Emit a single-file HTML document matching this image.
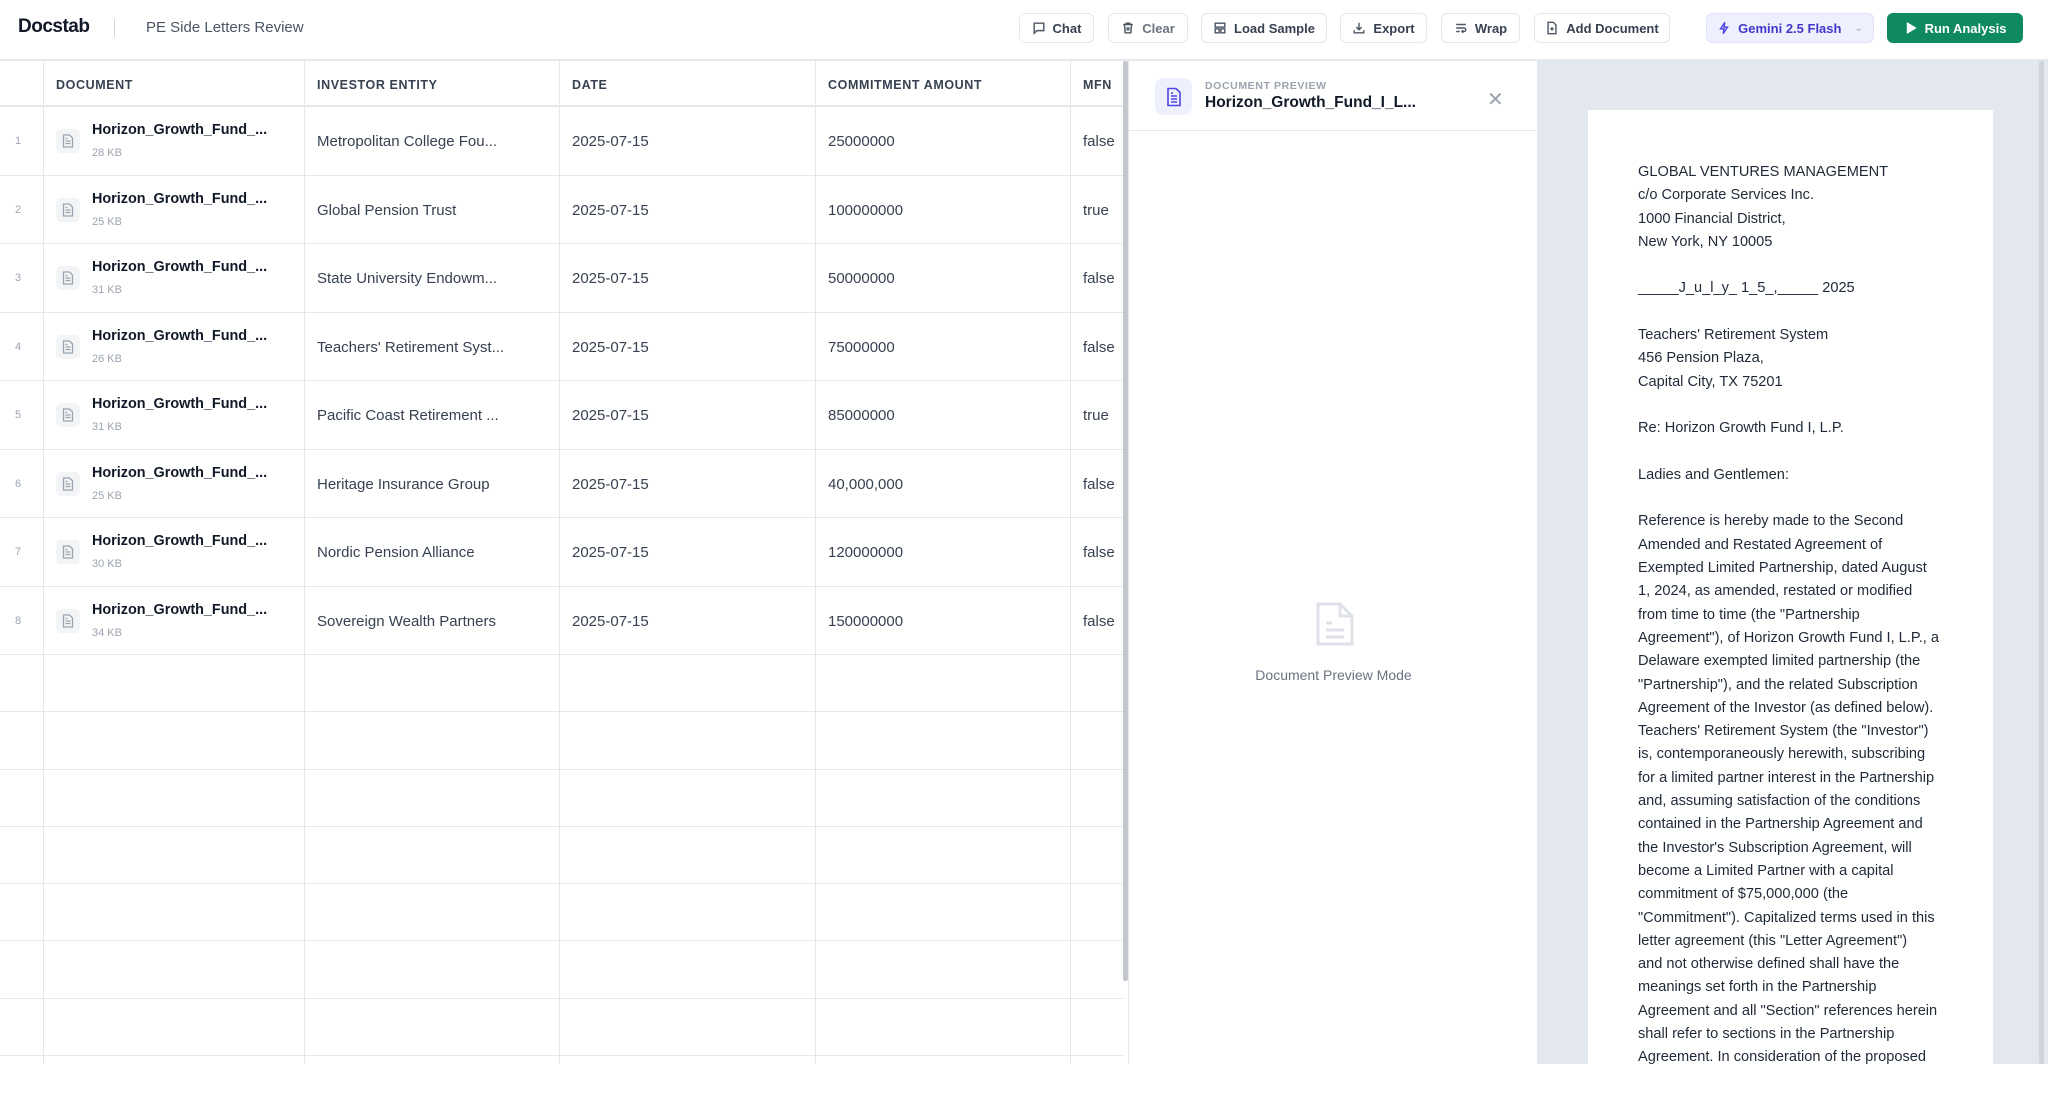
<!DOCTYPE html>
<html><head><meta charset="utf-8"><style>
*{box-sizing:border-box;margin:0;padding:0}
body{width:2048px;height:1064px;overflow:hidden;background:#fff;font-family:"Liberation Sans",sans-serif;color:#111827;position:relative}
.hdr{position:absolute;left:0;top:0;width:2048px;height:61px;border-bottom:2px solid #e5e7eb;background:#fff}
.logo{position:absolute;left:18px;top:16px;font-size:19px;font-weight:700;letter-spacing:-0.5px;color:#111827}
.sep{position:absolute;left:114px;top:19px;width:1px;height:18px;background:#d1d5db}
.title{position:absolute;left:146px;top:19px;font-size:15px;color:#4b5563}
.btn{position:absolute;top:13px;height:30px;border:1px solid #e5e7eb;border-radius:6px;background:#fff;font-size:13px;font-weight:700;color:#374151;display:flex;align-items:center;justify-content:center;gap:7px}
.btn svg{width:14px;height:14px;stroke:#4b5563;fill:none;stroke-width:1.6}
.tbl{position:absolute;left:0;top:61px;width:1123px;height:1003px;overflow:hidden}
.col{position:absolute;top:0;bottom:0;width:1px;background:#e5e7eb}
.hrow{position:absolute;left:0;top:0;width:1123px;height:46px;border-bottom:2px solid #e5e7eb}
.hrow span{position:absolute;top:17px;font-size:12.5px;font-weight:700;color:#374151;letter-spacing:0.6px}
.row{position:absolute;left:0;width:1123px;border-bottom:1px solid #e5e7eb}
.num{position:absolute;left:0;width:36px;text-align:center;font-size:11px;color:#9ca3af}
.dicon{position:absolute;left:56px;width:24px;height:24px;border-radius:5px;background:#f3f4f6;display:flex;align-items:center;justify-content:center}
.dname{position:absolute;left:92px;font-size:14.4px;font-weight:700;color:#111827}
.dsize{position:absolute;left:92px;font-size:11px;color:#9ca3af}
.cell{position:absolute;font-size:15px;color:#374151}
.sb{position:absolute;left:1123px;top:61px;width:5px;height:920px;background:#c4c7cc;border-radius:2px}
.prev{position:absolute;left:1128px;top:61px;width:409px;height:1003px;border-left:1px solid #e5e7eb;background:#fff}
.gray{position:absolute;left:1537px;top:61px;width:511px;height:1003px;background:#e3e7ee}
.paper{position:absolute;left:51px;top:49px;width:405px;height:1000px;background:#fff;padding:51px 0 0 50px;font-size:14.6px;line-height:23.3px;color:#1f2937;white-space:nowrap}
</style></head><body>
<div class="hdr">
<div class="logo">Docstab</div><div class="sep"></div><div class="title">PE Side Letters Review</div>
<div class="btn" style="left:1019px;width:75px"><svg viewBox="0 0 16 16"><path d="M2.5 2.5h11v8.5h-8l-3 3z"/></svg>Chat</div>
<div class="btn" style="left:1108px;width:80px;color:#6b7280"><svg viewBox="0 0 16 16"><path d="M2.5 4h11M6 4V2.5h4V4M4 4l.7 9.5h6.6L12 4M7 7v4M9 7v4"/></svg>Clear</div>
<div class="btn" style="left:1201px;width:126px"><svg viewBox="0 0 16 16"><rect x="2.5" y="2.5" width="11" height="4.5"/><rect x="2.5" y="9" width="4.5" height="4.5"/><rect x="9" y="9" width="4.5" height="4.5"/></svg>Load Sample</div>
<div class="btn" style="left:1340px;width:87px"><svg viewBox="0 0 16 16"><path d="M8 2v8M5 7l3 3 3-3M2.5 10.5v3h11v-3"/></svg>Export</div>
<div class="btn" style="left:1441px;width:79px"><svg viewBox="0 0 16 16"><path d="M2.5 4h11M2.5 8h9a2 2 0 010 4H9M10.5 10.5 9 12l1.5 1.5M2.5 12h4"/></svg>Wrap</div>
<div class="btn" style="left:1534px;width:136px"><svg viewBox="0 0 16 16"><path d="M3.5 1.5h6l3 3v10h-9zM8 7v4M6 9h4"/></svg>Add Document</div>
<div class="btn" style="left:1706px;width:168px;background:#eef0fd;border-color:#e0e3fb;color:#4338ca"><svg viewBox="0 0 16 16" style="stroke:#4f46e5"><path d="M9 1.5 4 9h4l-1 5.5L12 7H8z"/></svg>Gemini 2.5 Flash<span style="color:#9ca3af;font-weight:400;font-size:10px;margin-left:6px">&#8964;</span></div>
<div class="btn" style="left:1887px;width:136px;background:#0f8a5f;border-color:#0f8a5f;color:#fff"><svg viewBox="0 0 16 16" style="fill:#fff;stroke:#fff"><path d="M4 2.5v11l9-5.5z"/></svg>Run Analysis</div>
</div>

<div class="tbl">
<div class="col" style="left:43px"></div><div class="col" style="left:304px"></div><div class="col" style="left:559px"></div><div class="col" style="left:815px"></div><div class="col" style="left:1070px"></div>
<div class="hrow"><span style="left:56px">DOCUMENT</span><span style="left:317px">INVESTOR ENTITY</span><span style="left:572px">DATE</span><span style="left:828px">COMMITMENT AMOUNT</span><span style="left:1083px">MFN</span></div>
</div>
<div id="rows"></div>
<script>
var d=[["28","Metropolitan College Fou...","25000000","false"],["25","Global Pension Trust","100000000","true"],["31","State University Endowm...","50000000","false"],["26","Teachers' Retirement Syst...","75000000","false"],["31","Pacific Coast Retirement ...","85000000","true"],["25","Heritage Insurance Group","40,000,000","false"],["30","Nordic Pension Alliance","120000000","false"],["34","Sovereign Wealth Partners","150000000","false"]];
var h="";
var ic='<svg width="12" height="14" viewBox="0 0 12 14" fill="none" stroke="#9ca3af" stroke-width="1.3"><path d="M1.5 1h6l3 3v9h-9zM3.5 7h5M3.5 9.5h5M3.5 4.5h2"/></svg>';
for(var i=0;i<8;i++){var t=107+i*68.5;var r=d[i];
h+='<div class="row" style="top:'+t+'px;height:68.5px">'+
'<div class="num" style="top:28px">'+(i+1)+'</div>'+
'<div class="dicon" style="top:22px">'+ic+'</div>'+
'<div class="dname" style="top:15px">Horizon_Growth_Fund_...</div>'+
'<div class="dsize" style="top:40px">'+r[0]+' KB</div>'+
'<div class="cell" style="left:317px;top:26px">'+r[1]+'</div>'+
'<div class="cell" style="left:572px;top:26px">2025-07-15</div>'+
'<div class="cell" style="left:828px;top:26px">'+r[2]+'</div>'+
'<div class="cell" style="left:1083px;top:26px">'+r[3]+'</div></div>';}
for(var j=0;j<7;j++){h+='<div class="row" style="top:'+(655+j*57.3)+'px;height:57.3px"></div>';}
document.getElementById("rows").innerHTML=h;
</script>
<div class="sb"></div>

<div class="prev">
<div style="position:absolute;left:0;top:0;width:409px;height:70px;border-bottom:1px solid #e5e7eb"></div>
<div style="position:absolute;left:26px;top:17px;width:37px;height:37px;border-radius:8px;background:#eef0fd;display:flex;align-items:center;justify-content:center"><svg width="16" height="20" viewBox="0 0 16 20" fill="none" stroke="#4f46e5" stroke-width="1.6"><path d="M2 1.5h8l4 4v13H2zM5 9h6M5 12h6M5 15h6M5 6h2"/></svg></div>
<div style="position:absolute;left:76px;top:19px;font-size:10.5px;font-weight:700;color:#9ca3af;letter-spacing:0.6px">DOCUMENT PREVIEW</div>
<div style="position:absolute;left:76px;top:33px;font-size:15.5px;font-weight:700;color:#111827">Horizon_Growth_Fund_I_L...</div>
<div style="position:absolute;left:358px;top:26px;font-size:20px;color:#9ca3af;font-weight:300">&#x2715;</div>
<svg style="position:absolute;left:186px;top:540px" width="40" height="46" viewBox="0 0 40 46" fill="none" stroke="#dfe2e8" stroke-width="3"><path d="M3 3h22l12 12v28H3zM25 3v12h12M11 22h6M11 29h18M11 36h18"/></svg>
<div style="position:absolute;left:0;width:409px;top:606px;text-align:center;font-size:14px;color:#6b7280">Document Preview Mode</div>
</div>

<div class="gray"><div class="paper">GLOBAL VENTURES MANAGEMENT<br>c/o Corporate Services Inc.<br>1000 Financial District,<br>New York, NY 10005<br><br>_____J_u_l_y_ 1_5_,_____ 2025<br><br>Teachers' Retirement System<br>456 Pension Plaza,<br>Capital City, TX 75201<br><br>Re: Horizon Growth Fund I, L.P.<br><br>Ladies and Gentlemen:<br><br>Reference is hereby made to the Second<br>Amended and Restated Agreement of<br>Exempted Limited Partnership, dated August<br>1, 2024, as amended, restated or modified<br>from time to time (the "Partnership<br>Agreement"), of Horizon Growth Fund I, L.P., a<br>Delaware exempted limited partnership (the<br>"Partnership"), and the related Subscription<br>Agreement of the Investor (as defined below).<br>Teachers' Retirement System (the "Investor")<br>is, contemporaneously herewith, subscribing<br>for a limited partner interest in the Partnership<br>and, assuming satisfaction of the conditions<br>contained in the Partnership Agreement and<br>the Investor's Subscription Agreement, will<br>become a Limited Partner with a capital<br>commitment of $75,000,000 (the<br>"Commitment"). Capitalized terms used in this<br>letter agreement (this "Letter Agreement")<br>and not otherwise defined shall have the<br>meanings set forth in the Partnership<br>Agreement and all "Section" references herein<br>shall refer to sections in the Partnership<br>Agreement. In consideration of the proposed</div>
<div style="position:absolute;left:502px;top:0;width:5px;height:1003px;background:#cfd3da;border-radius:2px"></div></div>
</body></html>
